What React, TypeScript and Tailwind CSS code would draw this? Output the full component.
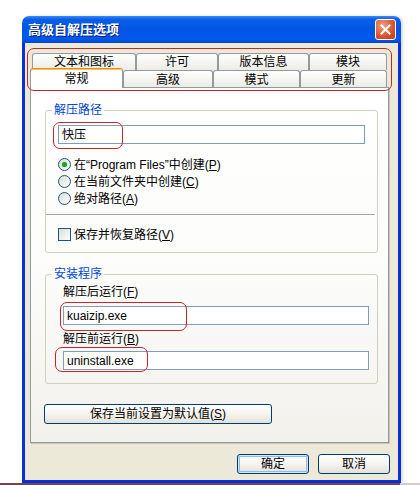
import React from "react";

const rowTabs = [
  { label: "文本和图标", w: 104 },
  { label: "许可", w: 82 },
  { label: "版本信息", w: 91 },
  { label: "模块", w: 78 },
];

const lowerTabs = [
  { label: "高级", w: 90 },
  { label: "模式", w: 87 },
  { label: "更新", w: 87 },
];

const Radio = ({ checked }: { checked?: boolean }) => (
  <span className="relative flex h-[13px] w-[13px] shrink-0 items-center justify-center rounded-full border border-[#1c5180] bg-gradient-to-br from-[#dcdcd4] to-white">
    {checked && <span className="h-[5px] w-[5px] rounded-full bg-[#21a121] shadow-[0_0_1px_#5bd25b]" />}
  </span>
);

const Btn = ({ children, className = "" }: { children: React.ReactNode; className?: string }) => (
  <button
    className={
      "flex h-[20px] items-center justify-center rounded-[3px] border border-[#003c74] bg-gradient-to-b from-white via-[#f5f4ef] to-[#e3e1d6] text-[12px] text-black " +
      className
    }
  >
    {children}
  </button>
);

export default function App() {
  return (
    <div className="relative h-[485px] w-[420px] overflow-hidden bg-white pl-[22px] pt-[16px] font-['Liberation_Sans','Noto_Sans_CJK_SC',sans-serif] text-[12px] text-black">
      {/* window */}
      <div className="flex h-[467px] w-[379px] flex-col rounded-t-[7px] shadow-[2px_0_3px_rgba(0,0,0,0.15)]">
        {/* title bar */}
        <div className="flex h-[27px] shrink-0 items-center justify-between rounded-t-[7px] bg-[linear-gradient(to_bottom,#3a8cf5_0%,#0a5fe8_12%,#0055e5_50%,#0058ec_85%,#0046d0_100%)] pl-[6px] pr-[5px]">
          <span className="text-[13px] font-bold text-white [text-shadow:1px_1px_0_#0a1e7a]">高级自解压选项</span>
          <span className="flex h-[21px] w-[21px] items-center justify-center rounded-[3px] border border-white bg-[radial-gradient(circle_at_35%_30%,#f0a080,#d7522c_60%,#c03a16)]">
            <svg width="11" height="11" viewBox="0 0 11 11">
              <path d="M1.5 1.5 L9.5 9.5 M9.5 1.5 L1.5 9.5" stroke="white" strokeWidth="2" strokeLinecap="square" />
            </svg>
          </span>
        </div>

        {/* body */}
        <div className="flex flex-1 flex-col border-x-[3px] border-b-[3px] border-[#0831d9] bg-[#ece9d8] pl-[5px] pt-[10px]">
          {/* tabs */}
          <div className="ml-[2px] flex h-[17px]">
            {rowTabs.map((t) => (
              <div
                key={t.label}
                style={{ width: t.w }}
                className="flex h-[17px] items-center justify-center rounded-t-[3px] border border-b-0 border-[#919b9c] bg-gradient-to-b from-white to-[#ecebe5]"
              >
                {t.label}
              </div>
            ))}
          </div>
          <div className="flex h-[17px] items-end">
            <div className="relative z-10 -mb-px flex h-[20px] w-[93px] items-center justify-center rounded-t-[3px] border border-b-0 border-[#919b9c] border-t-[#e68b2c] bg-white shadow-[inset_0_1px_0_#ffc83c]">
              常规
            </div>
            {lowerTabs.map((t) => (
              <div
                key={t.label}
                style={{ width: t.w }}
                className="flex h-[17px] items-center justify-center rounded-t-[3px] border border-b-0 border-[#919b9c] bg-gradient-to-b from-white to-[#ecebe5] pt-[2px]"
              >
                {t.label}
              </div>
            ))}
          </div>

          {/* panel */}
          <div className="relative flex h-[356px] w-[359px] flex-col border border-[#919b9c] bg-gradient-to-b from-white via-[#fcfcfb] to-[#f2f1ec] pl-[13px] pr-[11px] shadow-[1px_1px_0_#c6c3b5]">
            <fieldset className="ml-px mt-[14px] w-[333px] rounded-[3px] border border-[#d0d0bf] pb-[9px]">
              <legend className="ml-[6px] px-[2px] leading-[16px] text-[#0046d5]">解压路径</legend>
              <div className="mx-[12px] mt-[7px] flex h-[19px] items-center border border-[#7f9db9] bg-white px-[3px]">快压</div>
              <div className="ml-[12px] mt-[12px] flex flex-col">
                <label className="flex h-[17px] items-center gap-[3px]">
                  <Radio checked />
                  <span>在“Program Files”中创建(<u>P</u>)</span>
                </label>
                <label className="flex h-[17px] items-center gap-[3px]">
                  <Radio />
                  <span>在当前文件夹中创建(<u>C</u>)</span>
                </label>
                <label className="flex h-[17px] items-center gap-[3px]">
                  <Radio />
                  <span>绝对路径(<u>A</u>)</span>
                </label>
              </div>
              <div className="mr-[2px] mt-[7px] h-px bg-[#aca899]" />
              <label className="ml-[12px] mt-[11px] flex h-[17px] items-center gap-[3px]">
                <span className="h-[13px] w-[13px] border border-[#1c5180] bg-gradient-to-br from-[#dcdcd4] to-white" />
                <span>保存并恢复路径(<u>V</u>)</span>
              </label>
            </fieldset>

            <fieldset className="ml-px mt-[13px] w-[333px] rounded-[3px] border border-[#d0d0bf] pb-[13px]">
              <legend className="ml-[6px] px-[2px] leading-[16px] text-[#0046d5]">安装程序</legend>
              <div className="ml-[17px] mt-[2px] leading-[16px]">
                解压后运行(<u>F</u>)
              </div>
              <div className="ml-[17px] mr-[8px] mt-[6px] flex h-[19px] items-center border border-[#7f9db9] bg-white px-[3px]">
                kuaizip.exe
              </div>
              <div className="ml-[17px] mt-[6px] leading-[16px]">
                解压前运行(<u>B</u>)
              </div>
              <div className="ml-[17px] mr-[8px] mt-[4px] flex h-[19px] items-center border border-[#7f9db9] bg-white px-[3px]">
                uninstall.exe
              </div>
            </fieldset>

            <Btn className="mt-[20px] w-[228px]">
              保存当前设置为默认值(<u>S</u>)
            </Btn>
          </div>

          {/* dialog buttons */}
          <div className="mt-[11px] flex justify-end gap-[9px] pr-[8px]">
            <Btn className="w-[72px] shadow-[inset_0_0_0_1px_#cee7ff,inset_0_0_0_2px_#98b8ea]">确定</Btn>
            <Btn className="w-[72px]">取消</Btn>
          </div>
        </div>
      </div>
      <div className="-ml-[22px] flex h-[2px]">
        <div className="w-[400px] bg-[#6e4848]" />
        <div className="flex-1 bg-[#dcc8c8]" />
      </div>

      {/* red annotations */}
      <div className="pointer-events-none absolute left-[27px] top-[48px] h-[43px] w-[365px] rounded-[7px] border border-[#c4262a]" />
      <div className="pointer-events-none absolute left-[53px] top-[122px] h-[27px] w-[70px] rounded-[7px] border border-[#c4262a]" />
      <div className="pointer-events-none absolute left-[60px] top-[302px] h-[29px] w-[127px] rounded-[7px] border border-[#c4262a]" />
      <div className="pointer-events-none absolute left-[55px] top-[347px] h-[25px] w-[93px] rounded-[7px] border border-[#c4262a]" />
    </div>
  );
}
